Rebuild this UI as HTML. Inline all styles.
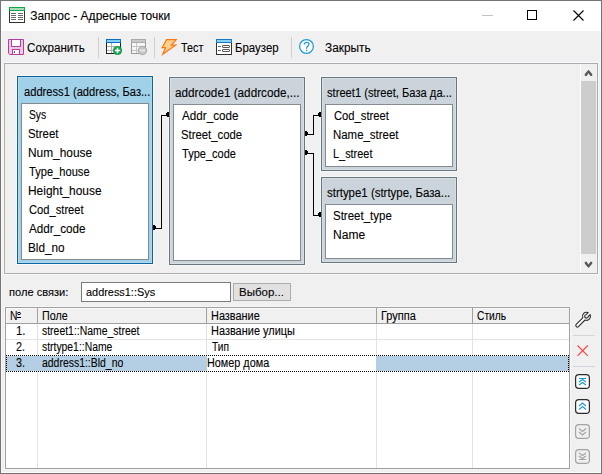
<!DOCTYPE html>
<html><head><meta charset="utf-8">
<style>
*{margin:0;padding:0;box-sizing:border-box}
html,body{width:602px;height:474px;overflow:hidden;background:#f0f0f0;font-family:"Liberation Sans",sans-serif;color:#000}
.a{position:absolute}
.t{position:absolute;white-space:nowrap;line-height:1;-webkit-text-stroke:0.1px #000}
svg{position:absolute;overflow:visible}
</style></head><body>
<div class="a" style="left:0px;top:0px;width:602px;height:474px;background:#f0f0f0;border:1px solid #747474;"></div>
<div class="a" style="left:1px;top:1px;width:1px;height:472px;background:#f7f7f7;"></div>
<div class="a" style="left:1px;top:472px;width:600px;height:1px;background:#fcfcfc;"></div>
<div class="a" style="left:600px;top:1px;width:1px;height:472px;background:#f8f8f8;"></div>
<div class="a" style="left:1px;top:1px;width:600px;height:30px;background:#ffffff;"></div>
<svg style="left:9px;top:7px" width="16" height="16" viewBox="0 0 16 16">
<rect x="0.5" y="0.5" width="15" height="15" fill="#fff" stroke="#333"/>
<rect x="0" y="0" width="16" height="4" fill="#17a34a"/>
<rect x="1" y="1" width="14" height="2" fill="#a9dcb9"/>
<g stroke="#6a6a6a" stroke-width="1">
<path d="M2 6.5h5M9 6.5h5M2 8.5h5M9 8.5h5M2 10.5h5M9 10.5h5M2 12.5h5M9 12.5h5"/>
</g></svg>
<div class="t" style="left:30.20px;top:10px;font-size:12px;color:#000;">Запрос - Адресные точки</div>
<div class="a" style="left:482px;top:15px;width:11px;height:1px;background:#c2c2c2;"></div>
<div class="a" style="left:527px;top:10px;width:10px;height:10px;border:1px solid #000;"></div>
<svg style="left:573px;top:10px" width="11" height="11" viewBox="0 0 11 11"><path d="M0.5 0.5L10.5 10.5M10.5 0.5L0.5 10.5" stroke="#000" stroke-width="1.1"/></svg>
<svg style="left:8px;top:39px" width="16" height="16" viewBox="0 0 16 16">
<path d="M0.5 0.5H15.5V15.5H1.8L0.5 14.2Z" fill="#f2c6e6" stroke="#b33fa1"/>
<rect x="3.5" y="0.5" width="9" height="7" fill="#fff" stroke="#b33fa1"/>
<rect x="4.5" y="10.5" width="7" height="5" fill="#fff" stroke="#b33fa1"/>
<rect x="6" y="12" width="1" height="2" fill="#555"/>
</svg>
<div class="t" style="left:27.40px;top:42px;font-size:12px;color:#000;transform:scaleX(0.9683);transform-origin:0 0;">Сохранить</div>
<div class="a" style="left:98px;top:37px;width:1px;height:21px;background:#d0d0d0;"></div>
<svg style="left:106px;top:39px" width="17" height="17" viewBox="0 0 17 17">
<rect x="0.5" y="0.5" width="14" height="14" fill="#fff" stroke="#222"/>
<rect x="0" y="0" width="15" height="4" fill="#0b6fc4"/>
<rect x="1" y="1" width="13" height="2" fill="#83d0f2"/>
<path d="M1 7.5H14M1 11.5H10M5.5 4V14" stroke="#b0b0b0" stroke-width="1"/>
<circle cx="11.5" cy="11.5" r="4.6" fill="#14a24e"/>
<path d="M11.5 8.8V14.2M8.8 11.5H14.2" stroke="#fff" stroke-width="1.6"/>
</svg>
<svg style="left:131px;top:39px" width="17" height="17" viewBox="0 0 17 17">
<rect x="0.5" y="0.5" width="14" height="14" fill="#f6f6f6" stroke="#9a9a9a"/>
<rect x="0" y="0" width="15" height="4" fill="#a9a9a9"/>
<rect x="1" y="1" width="13" height="2" fill="#c9c9c9"/>
<path d="M1 7.5H14M1 11.5H10M5.5 4V14" stroke="#c4c4c4" stroke-width="1"/>
<circle cx="11.5" cy="11.5" r="4.2" fill="#c6c6c6" stroke="#a6a6a6" stroke-width="0.9"/>
<path d="M9 11.5H14" stroke="#eeeeee" stroke-width="1.5"/>
</svg>
<div class="a" style="left:154px;top:37px;width:1px;height:21px;background:#d0d0d0;"></div>
<svg style="left:161px;top:39px" width="17" height="17" viewBox="0 0 17 17">
<path d="M5.6 0.7H15.2L10.4 6.2H14.6L1.8 15.2L4.5 8.6H1.2Z" fill="#ffd28a" stroke="#fb7617" stroke-width="1.25" stroke-linejoin="miter"/>
</svg>
<div class="t" style="left:180.70px;top:42px;font-size:12px;color:#000;transform:scaleX(0.9000);transform-origin:0 0;">Тест</div>
<svg style="left:216px;top:39px" width="16" height="16" viewBox="0 0 16 16">
<rect x="0.5" y="0.5" width="15" height="15" fill="#fff" stroke="#333"/>
<rect x="0" y="0" width="16" height="4" fill="#1a78c8"/>
<rect x="1" y="1" width="14" height="2" fill="#86d0f2"/>
<path d="M2 7.5H5M2 11.5H5" stroke="#666"/>
<rect x="6.5" y="6.5" width="7" height="2" rx="0.5" fill="#fff" stroke="#5a5a5a"/>
<rect x="6.5" y="10.5" width="7" height="2" rx="0.5" fill="#fff" stroke="#5a5a5a"/>
</svg>
<div class="t" style="left:234.55px;top:42px;font-size:12px;color:#000;transform:scaleX(0.9533);transform-origin:0 0;">Браузер</div>
<div class="a" style="left:291px;top:37px;width:1px;height:21px;background:#d0d0d0;"></div>
<svg style="left:298px;top:38px" width="17" height="17" viewBox="0 0 17 17">
<circle cx="8.5" cy="8.4" r="6.9" fill="#fff" stroke="#1b9ad8" stroke-width="1.25"/>
<path d="M6.3 6.5C6.3 5 7.3 4.3 8.6 4.3C10 4.3 11 5.1 11 6.3C11 7.9 8.6 8.3 8.6 10.2V10.7" fill="none" stroke="#1b9ad8" stroke-width="1.2"/>
<rect x="7.9" y="11.7" width="1.4" height="1.4" fill="#1b9ad8"/>
</svg>
<div class="t" style="left:325.00px;top:42px;font-size:12px;color:#000;transform:scaleX(0.9870);transform-origin:0 0;">Закрыть</div>
<div class="a" style="left:3px;top:62px;width:596px;height:213px;background:#f8f8f8;"></div>
<div class="a" style="left:4px;top:63px;width:594px;height:211px;background:#f0f0f0;border:1px solid #abadb3;"></div>
<div class="a" style="left:580px;top:64px;width:1px;height:209px;background:#fdfdfd;"></div>
<div class="a" style="left:581px;top:64px;width:16px;height:209px;background:#f0f0f0;"></div>
<div class="a" style="left:581px;top:81px;width:15px;height:173px;background:#cdcdcd;"></div>
<svg style="left:583px;top:69px" width="12" height="9" viewBox="0 0 12 9"><polygon points="1.8,7.0 3.6,7.0 5.5,4.2 7.4,7.0 9.2,7.0 9.2,5.0 5.5,0.8 1.8,5.0" fill="#595959"/></svg>
<svg style="left:583px;top:260px" width="12" height="9" viewBox="0 0 12 9"><polygon points="1.8,1.8 3.6,1.8 5.5,4.6 7.4,1.8 9.2,1.8 9.2,3.8 5.5,8.1 1.8,3.8" fill="#595959"/></svg>
<div class="a" style="left:16px;top:75px;width:138px;height:190px;background:#fff9f6;"></div>
<div class="a" style="left:17px;top:76px;width:136px;height:188px;background:#a1d1e9;border:1px solid #0f62a0;"></div>
<div class="a" style="left:18px;top:77px;width:134px;height:186px;border:1px solid #aedaef;"></div>
<div class="a" style="left:21px;top:103px;width:128px;height:157px;background:#fff;border:1px solid #858b93;"></div>
<div class="t" style="left:23.60px;top:86px;font-size:12px;color:#000;transform:scaleX(0.9289);transform-origin:0 0;">address1 (address, Баз...</div>
<div class="t" style="left:28.54px;top:109px;font-size:12px;color:#000;transform:scaleX(0.8579);transform-origin:0 0;">Sys</div>
<div class="t" style="left:28.45px;top:128px;font-size:12px;color:#000;transform:scaleX(0.9516);transform-origin:0 0;">Street</div>
<div class="t" style="left:28.41px;top:147px;font-size:12px;color:#000;transform:scaleX(0.9906);transform-origin:0 0;">Num_house</div>
<div class="t" style="left:29.40px;top:166px;font-size:12px;color:#000;transform:scaleX(0.9262);transform-origin:0 0;">Type_house</div>
<div class="t" style="left:28.41px;top:185px;font-size:12px;color:#000;transform:scaleX(0.9932);transform-origin:0 0;">Height_house</div>
<div class="t" style="left:29.40px;top:204px;font-size:12px;color:#000;transform:scaleX(0.9305);transform-origin:0 0;">Cod_street</div>
<div class="t" style="left:29.40px;top:223px;font-size:12px;color:#000;transform:scaleX(0.9724);transform-origin:0 0;">Addr_code</div>
<div class="t" style="left:28.42px;top:242px;font-size:12px;color:#000;transform:scaleX(0.9806);transform-origin:0 0;">Bld_no</div>
<div class="a" style="left:168px;top:76px;width:138px;height:190px;background:#f9f8f8;"></div>
<div class="a" style="left:169px;top:77px;width:136px;height:188px;background:#cbd4db;border:1px solid #67777f;"></div>
<div class="a" style="left:170px;top:78px;width:134px;height:186px;border:1px solid #d6dee2;"></div>
<div class="a" style="left:173px;top:104px;width:128px;height:157px;background:#fff;border:1px solid #858b93;"></div>
<div class="t" style="left:175.40px;top:87px;font-size:12px;color:#000;transform:scaleX(0.9772);transform-origin:0 0;">addrcode1 (addrcode,...</div>
<div class="t" style="left:181.50px;top:110px;font-size:12px;color:#000;transform:scaleX(0.9724);transform-origin:0 0;">Addr_code</div>
<div class="t" style="left:180.55px;top:129px;font-size:12px;color:#000;transform:scaleX(0.9453);transform-origin:0 0;">Street_code</div>
<div class="t" style="left:181.50px;top:148px;font-size:12px;color:#000;transform:scaleX(0.9186);transform-origin:0 0;">Type_code</div>
<div class="a" style="left:320px;top:76px;width:138px;height:96px;background:#f9f8f8;"></div>
<div class="a" style="left:321px;top:77px;width:136px;height:94px;background:#cbd4db;border:1px solid #67777f;"></div>
<div class="a" style="left:322px;top:78px;width:134px;height:92px;border:1px solid #d6dee2;"></div>
<div class="a" style="left:325px;top:104px;width:128px;height:63px;background:#fff;border:1px solid #858b93;"></div>
<div class="t" style="left:327.40px;top:87px;font-size:12px;color:#000;transform:scaleX(0.9299);transform-origin:0 0;">street1 (street, База да...</div>
<div class="t" style="left:333.50px;top:110px;font-size:12px;color:#000;transform:scaleX(0.9356);transform-origin:0 0;">Cod_street</div>
<div class="t" style="left:332.55px;top:129px;font-size:12px;color:#000;transform:scaleX(0.9529);transform-origin:0 0;">Name_street</div>
<div class="t" style="left:332.59px;top:148px;font-size:12px;color:#000;transform:scaleX(0.9093);transform-origin:0 0;">L_street</div>
<div class="a" style="left:320px;top:176px;width:138px;height:88px;background:#f9f8f8;"></div>
<div class="a" style="left:321px;top:177px;width:136px;height:86px;background:#cbd4db;border:1px solid #67777f;"></div>
<div class="a" style="left:322px;top:178px;width:134px;height:84px;border:1px solid #d6dee2;"></div>
<div class="a" style="left:325px;top:204px;width:128px;height:55px;background:#fff;border:1px solid #858b93;"></div>
<div class="t" style="left:327.40px;top:187px;font-size:12px;color:#000;transform:scaleX(0.9535);transform-origin:0 0;">strtype1 (strtype, База...</div>
<div class="t" style="left:332.94px;top:210px;font-size:12px;color:#000;transform:scaleX(0.9583);transform-origin:0 0;">Street_type</div>
<div class="t" style="left:333.20px;top:229px;font-size:12px;color:#000;transform:scaleX(1.0032);transform-origin:0 0;">Name</div>
<div class="a" style="left:153px;top:228px;width:9px;height:1px;background:#000;"></div>
<div class="a" style="left:161px;top:115px;width:1px;height:114px;background:#000;"></div>
<div class="a" style="left:161px;top:115px;width:8px;height:1px;background:#000;"></div>
<div class="a" style="left:153px;top:225px;width:2px;height:5px;background:#000;"></div>
<div class="a" style="left:155px;top:226px;width:1px;height:3px;background:#000;"></div>
<div class="a" style="left:166px;top:113px;width:1px;height:3px;background:#000;"></div>
<div class="a" style="left:167px;top:112px;width:2px;height:5px;background:#000;"></div>
<div class="a" style="left:305px;top:134px;width:9px;height:1px;background:#000;"></div>
<div class="a" style="left:313px;top:115px;width:1px;height:20px;background:#000;"></div>
<div class="a" style="left:313px;top:115px;width:8px;height:1px;background:#000;"></div>
<div class="a" style="left:305px;top:131px;width:2px;height:5px;background:#000;"></div>
<div class="a" style="left:307px;top:132px;width:1px;height:3px;background:#000;"></div>
<div class="a" style="left:318px;top:113px;width:1px;height:3px;background:#000;"></div>
<div class="a" style="left:319px;top:112px;width:2px;height:5px;background:#000;"></div>
<div class="a" style="left:305px;top:153px;width:9px;height:1px;background:#000;"></div>
<div class="a" style="left:313px;top:153px;width:1px;height:63px;background:#000;"></div>
<div class="a" style="left:313px;top:215px;width:8px;height:1px;background:#000;"></div>
<div class="a" style="left:305px;top:150px;width:2px;height:5px;background:#000;"></div>
<div class="a" style="left:307px;top:151px;width:1px;height:3px;background:#000;"></div>
<div class="a" style="left:318px;top:213px;width:1px;height:3px;background:#000;"></div>
<div class="a" style="left:319px;top:212px;width:2px;height:5px;background:#000;"></div>
<div class="t" style="left:8.90px;top:287px;font-size:11px;color:#000;transform:scaleX(1.0086);transform-origin:0 0;">поле связи:</div>
<div class="a" style="left:81px;top:282px;width:150px;height:20px;background:#fff;border:1px solid #7a7a7a;"></div>
<div class="t" style="left:86.00px;top:287px;font-size:11px;color:#000;transform:scaleX(0.9914);transform-origin:0 0;">address1::Sys</div>
<div class="a" style="left:233px;top:283px;width:58px;height:18px;background:#e1e1e1;border:1px solid #adadad;"></div>
<div class="t" style="left:239.16px;top:287px;font-size:11px;color:#000;transform:scaleX(1.0439);transform-origin:0 0;">Выбор...</div>
<div class="a" style="left:4px;top:306px;width:567px;height:164px;background:#f7f7f7;"></div>
<div class="a" style="left:5px;top:307px;width:565px;height:162px;background:#fff;border:1px solid #a0a0a0;"></div>
<div class="a" style="left:6px;top:308px;width:563px;height:15px;background:#f0f0f0;"></div>
<div class="a" style="left:6px;top:308px;width:563px;height:1px;background:#fbfbfb;"></div>
<div class="a" style="left:6px;top:308px;width:1px;height:15px;background:#fbfbfb;"></div>
<div class="a" style="left:6px;top:323px;width:563px;height:1px;background:#a0a0a0;"></div>
<div class="a" style="left:37px;top:308px;width:1px;height:15px;background:#a0a0a0;"></div>
<div class="a" style="left:37px;top:324px;width:1px;height:144px;background:#e3e3e3;"></div>
<div class="a" style="left:206px;top:308px;width:1px;height:15px;background:#a0a0a0;"></div>
<div class="a" style="left:206px;top:324px;width:1px;height:144px;background:#e3e3e3;"></div>
<div class="a" style="left:376px;top:308px;width:1px;height:15px;background:#a0a0a0;"></div>
<div class="a" style="left:376px;top:324px;width:1px;height:144px;background:#e3e3e3;"></div>
<div class="a" style="left:472px;top:308px;width:1px;height:15px;background:#a0a0a0;"></div>
<div class="a" style="left:472px;top:324px;width:1px;height:144px;background:#e3e3e3;"></div>
<div class="a" style="left:6px;top:339px;width:563px;height:1px;background:#e3e3e3;"></div>
<div class="a" style="left:6px;top:356px;width:563px;height:15px;background:#b4cfe3;"></div>
<div class="a" style="left:207px;top:356px;width:169px;height:15px;background:#fff;"></div>
<div class="a" style="left:6px;top:355px;width:563px;height:1px;background:repeating-linear-gradient(90deg,#000 0 1px,transparent 1px 2px);"></div>
<div class="a" style="left:6px;top:371px;width:563px;height:1px;background:repeating-linear-gradient(90deg,#000 0 1px,transparent 1px 2px);"></div>
<div class="a" style="left:6px;top:355px;width:1px;height:17px;background:repeating-linear-gradient(180deg,#000 0 1px,transparent 1px 2px);"></div>
<div class="a" style="left:568px;top:355px;width:1px;height:17px;background:repeating-linear-gradient(180deg,#000 0 1px,transparent 1px 2px);"></div>
<div class="t" style="left:9.74px;top:310px;font-size:12px;color:#000;transform:scaleX(0.8571);transform-origin:0 0;">N</div>
<svg style="left:16px;top:310px" width="6" height="9" viewBox="0 0 6 9"><ellipse cx="3" cy="3.5" rx="1.5" ry="1.1" fill="none" stroke="#000" stroke-width="1"/><rect x="1" y="7" width="4" height="1" fill="#000"/></svg>
<div class="t" style="left:42.01px;top:310px;font-size:12px;color:#000;transform:scaleX(0.8929);transform-origin:0 0;">Поле</div>
<div class="t" style="left:210.89px;top:310px;font-size:12px;color:#000;transform:scaleX(0.9094);transform-origin:0 0;">Название</div>
<div class="t" style="left:380.58px;top:310px;font-size:12px;color:#000;transform:scaleX(0.9162);transform-origin:0 0;">Группа</div>
<div class="t" style="left:477.00px;top:310px;font-size:12px;color:#000;transform:scaleX(0.8529);transform-origin:0 0;">Стиль</div>
<div class="t" style="left:15.65px;top:325px;font-size:12px;color:#000;transform:scaleX(0.9500);transform-origin:0 0;">1.</div>
<div class="t" style="left:41.90px;top:325px;font-size:12px;color:#000;transform:scaleX(0.8696);transform-origin:0 0;">street1::Name_street</div>
<div class="t" style="left:210.99px;top:325px;font-size:12px;color:#000;transform:scaleX(0.9133);transform-origin:0 0;">Название улицы</div>
<div class="t" style="left:16.10px;top:341px;font-size:12px;color:#000;transform:scaleX(0.9000);transform-origin:0 0;">2.</div>
<div class="t" style="left:41.90px;top:341px;font-size:12px;color:#000;transform:scaleX(0.8642);transform-origin:0 0;">strtype1::Name</div>
<div class="t" style="left:212.00px;top:341px;font-size:12px;color:#000;transform:scaleX(0.8450);transform-origin:0 0;">Тип</div>
<div class="t" style="left:16.10px;top:357px;font-size:12px;color:#000;transform:scaleX(0.9000);transform-origin:0 0;">3.</div>
<div class="t" style="left:41.90px;top:357px;font-size:12px;color:#000;transform:scaleX(0.8699);transform-origin:0 0;">address1::Bld_no</div>
<div class="t" style="left:206.80px;top:357px;font-size:12px;color:#000;transform:scaleX(0.9029);transform-origin:0 0;">Номер дома</div>
<svg style="left:572px;top:308px" width="22" height="22" viewBox="0 0 22 22"><path d="M16.11 4.64 A4.0 4.0 0 0 0 10.80 9.81 L4.21 16.40 A1.55 1.55 0 0 0 6.40 18.59 L12.99 12.00 A4.0 4.0 0 0 0 18.16 6.69 L16.34 8.51 A1.85 1.85 0 1 1 14.29 6.46 Z" fill="#fff" stroke="#2e2e2e" stroke-width="1.15" stroke-linejoin="round"/></svg>
<div class="a" style="left:573px;top:335px;width:22px;height:1px;background:#d3d5dc;"></div>
<svg style="left:577px;top:345px" width="12" height="12" viewBox="0 0 12 12"><path d="M0.5 0.5L10.8 10.8M10.8 0.5L0.5 10.8" stroke="#ff4343" stroke-width="1.15"/></svg>
<div class="a" style="left:573px;top:366px;width:22px;height:1px;background:#d3d5dc;"></div>
<svg style="left:575px;top:374px" width="15" height="15" viewBox="0 0 15 15"><rect x="0.6" y="0.6" width="13.8" height="13.8" rx="3.2" fill="#fff" stroke="#2b2b2b" stroke-width="1.2"/><path d="M4 4.5H11M4 8L7.5 5.5L11 8M4 11L7.5 8.5L11 11" fill="none" stroke="#1a9ad8" stroke-width="1.1"/></svg>
<svg style="left:575px;top:399px" width="15" height="15" viewBox="0 0 15 15"><rect x="0.6" y="0.6" width="13.8" height="13.8" rx="3.2" fill="#fff" stroke="#2b2b2b" stroke-width="1.2"/><path d="M4 7L7.5 4L11 7M4 10.5L7.5 7.5L11 10.5" fill="none" stroke="#1a9ad8" stroke-width="1.1"/></svg>
<svg style="left:575px;top:424px" width="15" height="15" viewBox="0 0 15 15"><rect x="0.6" y="0.6" width="13.8" height="13.8" rx="3.2" fill="#efefef" stroke="#a4a4a4" stroke-width="1.2"/><path d="M4 4.5L7.5 7.5L11 4.5M4 8L7.5 11L11 8" fill="none" stroke="#a4a4a4" stroke-width="1.1"/></svg>
<svg style="left:575px;top:449px" width="15" height="15" viewBox="0 0 15 15"><rect x="0.6" y="0.6" width="13.8" height="13.8" rx="3.2" fill="#efefef" stroke="#a4a4a4" stroke-width="1.2"/><path d="M4 4L7.5 6.5L11 4M4 7L7.5 9.5L11 7M4 10.5H11" fill="none" stroke="#a4a4a4" stroke-width="1.1"/></svg>
</body></html>
